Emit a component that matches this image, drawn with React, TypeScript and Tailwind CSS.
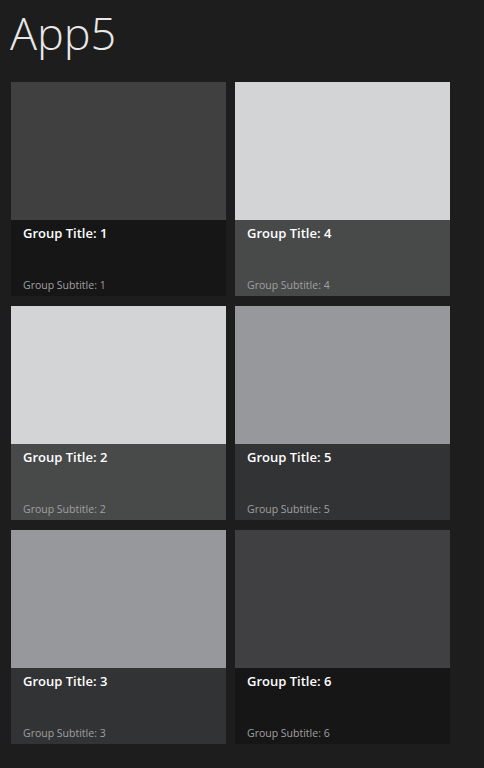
import React from 'react'

interface GroupData {
  id: number
  image: string
  panel: string
}

const groups: GroupData[] = [
  { id: 1, image: 'bg-[#404040]', panel: 'bg-[#161616]' },
  { id: 2, image: 'bg-[#d3d4d6]', panel: 'bg-[#484a4a]' },
  { id: 3, image: 'bg-[#97989b]', panel: 'bg-[#323335]' },
  { id: 4, image: 'bg-[#d3d4d6]', panel: 'bg-[#484a4a]' },
  { id: 5, image: 'bg-[#97989b]', panel: 'bg-[#323335]' },
  { id: 6, image: 'bg-[#404042]', panel: 'bg-[#161616]' },
]

const GroupTile = ({ group }: { group: GroupData }) => {
  return (
    <div className="flex h-[214px] w-[215px] flex-col">
      <div className={`h-[138px] ${group.image}`} />
      <div className={`flex flex-1 flex-col justify-between px-3 pt-[4px] pb-[4px] ${group.panel}`}>
        <h2 className="text-[13px] font-semibold leading-[18px] text-white">Group Title: {group.id}</h2>
        <p className="text-[10.5px] leading-[14px] text-[#a0a0a0]">Group Subtitle: {group.id}</p>
      </div>
    </div>
  )
}

export default function App() {
  return (
    <div
      className="h-[768px] w-[484px] overflow-hidden bg-[#1d1d1d]"
      style={{ fontFamily: '"Segoe UI", "Open Sans", "Noto Sans", sans-serif' }}
    >
      <h1 className="pl-[10px] pt-[7px] text-[45px] font-light leading-[52px] text-[#e8e8e8]">App5</h1>
      <div className="mt-[23px] grid w-fit grid-flow-col grid-rows-3 gap-x-[9px] gap-y-[10px] pl-[11px]">
        {groups.map((g) => (
          <GroupTile key={g.id} group={g} />
        ))}
      </div>
    </div>
  )
}
